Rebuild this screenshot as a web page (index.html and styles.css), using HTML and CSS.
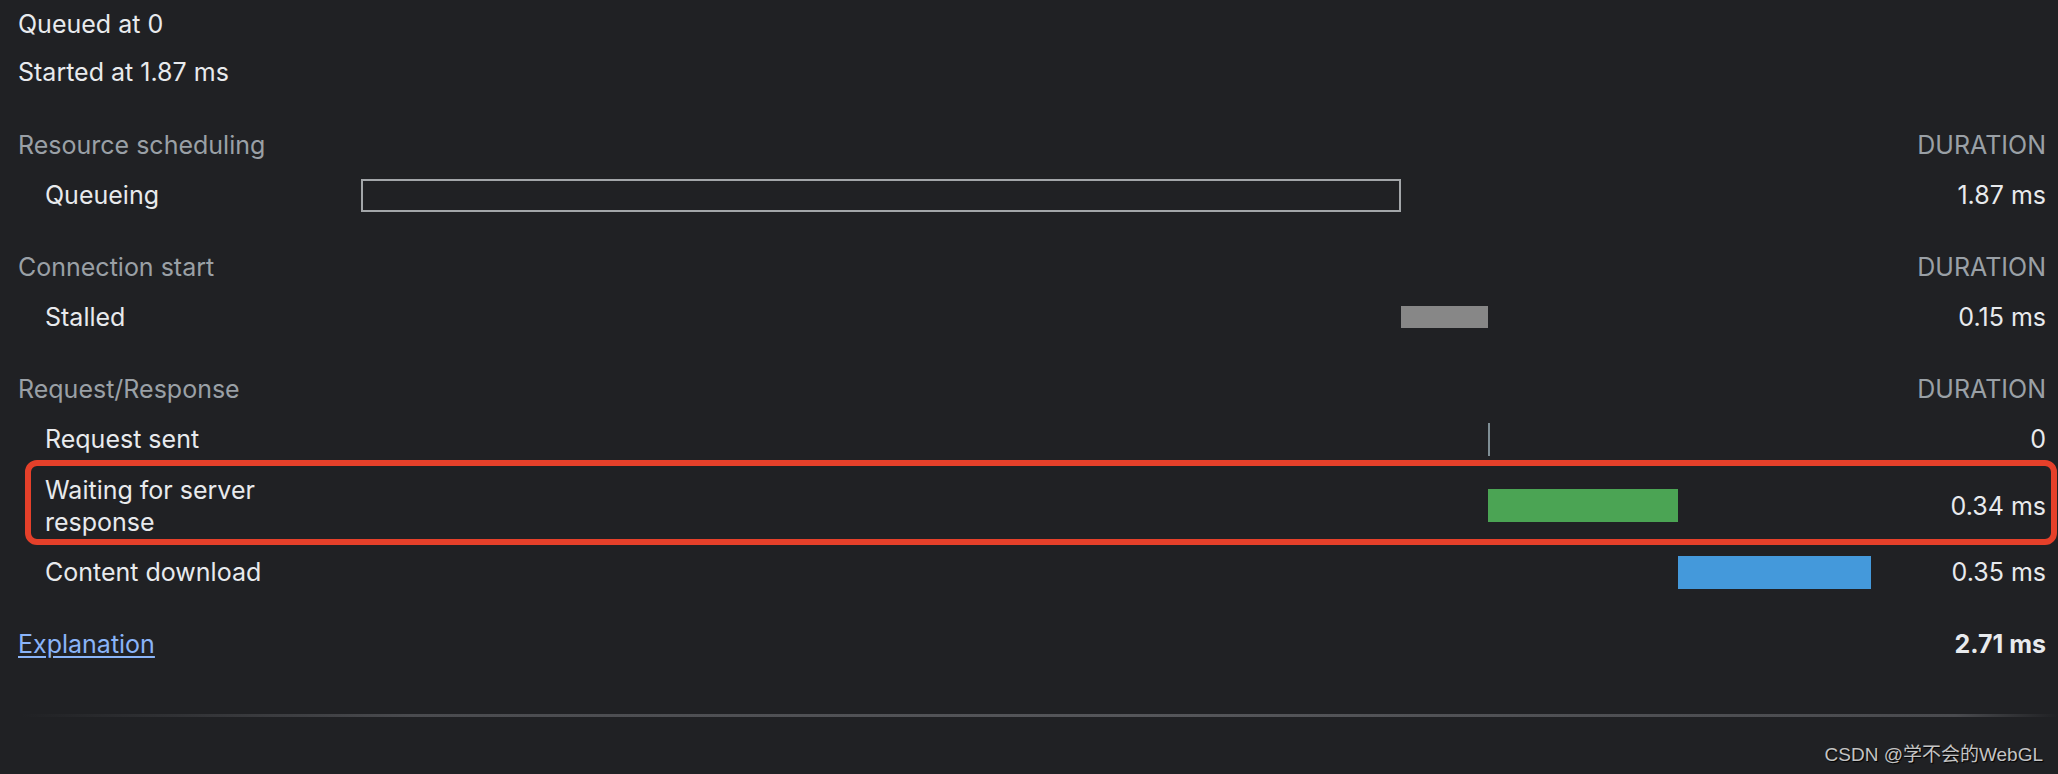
FILE: index.html
```html
<!DOCTYPE html>
<html lang="en">
<head>
<meta charset="utf-8">
<title>Timing</title>
<link rel="stylesheet" href="styles.css">
</head>
<body>
<div class="page">
  <div class="meta">Queued at 0</div>
  <div class="meta">Started at 1.87 ms</div>

  <div class="timing">
    <div class="row header"><span class="label">Resource scheduling</span><span class="dur">DURATION</span></div>
    <div class="row"><span class="label item">Queueing</span><div class="track"><div class="bar queueing" style="margin-left:0%;width:68.874%"></div></div><span class="dur">1.87 ms</span></div>

    <div class="row header gap"><span class="label">Connection start</span><span class="dur">DURATION</span></div>
    <div class="row"><span class="label item">Stalled</span><div class="track"><div class="bar stalled" style="margin-left:68.874%;width:5.762%"></div></div><span class="dur">0.15 ms</span></div>

    <div class="row header gap"><span class="label">Request/Response</span><span class="dur">DURATION</span></div>
    <div class="row"><span class="label item">Request sent</span><div class="track"><div class="bar sent" style="margin-left:74.636%"></div></div><span class="dur">0</span></div>
    <div class="row tall highlight"><span class="label item wrap">Waiting for server response</span><div class="track"><div class="bar waiting" style="margin-left:74.636%;width:12.583%"></div></div><span class="dur">0.34 ms</span></div>
    <div class="row"><span class="label item">Content download</span><div class="track"><div class="bar download" style="margin-left:87.219%;width:12.781%"></div></div><span class="dur">0.35 ms</span></div>

    <div class="row footer"><a class="label link" href="#">Explanation</a><span class="dur total">2.71 ms</span></div>
  </div>

  <div class="divider"></div>

  <div class="next">Server Timing</div>
</div>
<div class="watermark">CSDN @学不会的WebGL</div>
</body>
</html>
```
FILE: styles.css
```css
html, body {
  margin: 0;
  padding: 0;
  background: #202124;
  overflow: hidden;
}
body {
  width: 2058px;
  height: 774px;
  position: relative;
  font-family: Inter, "Liberation Sans", "Noto Sans CJK SC", sans-serif;
  font-size: 25px;
  color: #e8eaed;
}
.page {
  padding: 0 12px 0 18px;
}
.meta {
  height: 48px;
  line-height: 48px;
}
.timing {
  margin-top: 24px;
}
.row {
  display: grid;
  grid-template-columns: 343px 1fr 175px;
  align-items: center;
  height: 50px;
  line-height: 32px;
}
.row.gap {
  margin-top: 22px;
}
.row.tall {
  height: 83px;
  position: relative;
}
.header {
  color: #9aa0a6;
}
.header .label {
  grid-column: 1 / 3;
}
.label.item {
  padding-left: 27px;
}
.label.wrap {
  width: 230px;
}
.track {
  display: flex;
  align-items: center;
  height: 100%;
}
.bar {
  height: 33px;
  box-sizing: border-box;
  flex: none;
}
.bar.queueing {
  border: 2px solid #a3a6a9;
}
.bar.stalled {
  height: 22px;
  background: #878787;
}
.bar.sent {
  width: 2px;
  background: #7f8e95;
}
.bar.waiting {
  background: #4ba454;
}
.bar.download {
  background: #4499db;
}
.dur {
  text-align: right;
  grid-column: 3;
}
.footer {
  margin-top: 22px;
}
.footer .label {
  grid-column: 1 / 3;
}
.link {
  color: #8ab4f8;
  text-decoration: underline;
  text-underline-offset: 3px;
  justify-self: start;
}
.total {
  font-weight: 700;
}
.highlight::after {
  content: "";
  position: absolute;
  top: -4px;
  bottom: 2px;
  left: 7px;
  right: -11px;
  border: 6px solid #e5402a;
  border-radius: 12px;
}
.divider {
  margin-top: 45px;
  margin-left: -18px;
  margin-right: -12px;
  height: 3px;
  background: linear-gradient(to right, rgba(90,91,94,0) 1%, #4a4b4f 20%, #55565a 55%, #4a4b4f 95%, rgba(90,91,94,0) 100%);
}
.next {
  margin-top: 52px;
  line-height: 32px;
  color: #9aa0a6;
}
.watermark {
  position: absolute;
  right: 15px;
  bottom: 8px;
  font-family: "Liberation Sans", "Noto Sans CJK SC", sans-serif;
  font-size: 19px;
  color: #c4c4c4;
  text-shadow: 1px 1px 1px #000;
}
```
